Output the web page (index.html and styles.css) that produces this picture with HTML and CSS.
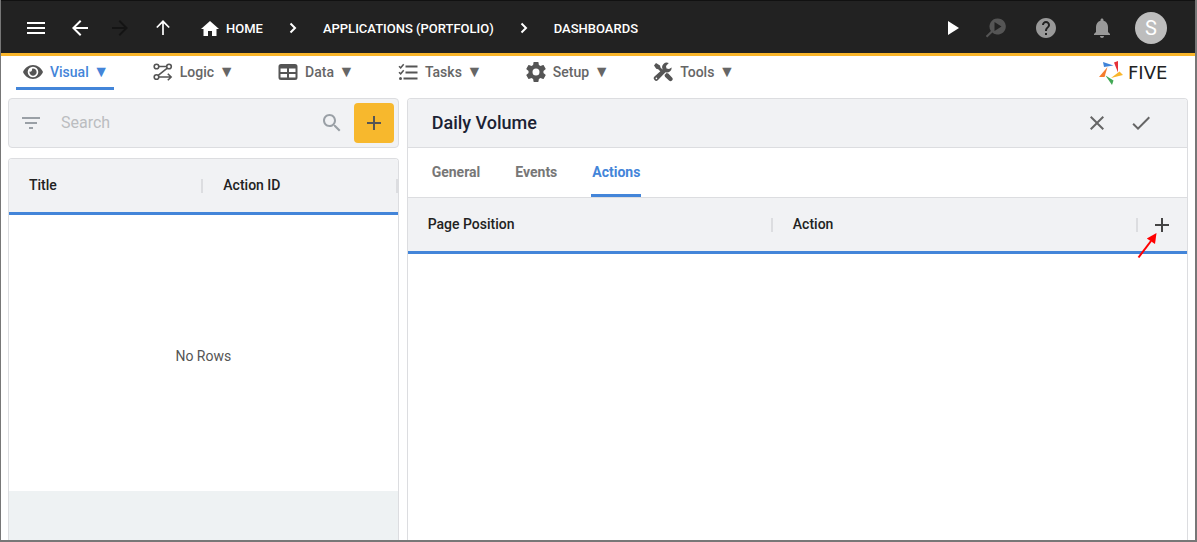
FILE: index.html
```html
<!DOCTYPE html>
<html lang="en">
<head>
<meta charset="utf-8">
<meta name="viewport" content="width=device-width, initial-scale=1">
<title>Five - Dashboards</title>
<link rel="stylesheet" href="styles.css">
</head>
<body>
<div class="app">
  <header class="topbar">
    <button class="icon-btn menu-btn" aria-label="Menu"><svg viewBox="0 0 24 24"><path d="M3 18h18v-2H3v2zm0-5h18v-2H3v2zm0-7v2h18V6H3z"/></svg></button>
    <button class="icon-btn back-btn" aria-label="Back"><svg viewBox="0 0 24 24"><path d="M20 11H7.83l5.59-5.59L12 4l-8 8 8 8 1.41-1.41L7.83 13H20v-2z"/></svg></button>
    <button class="icon-btn forward-btn" aria-label="Forward" disabled><svg viewBox="0 0 24 24"><path d="M12 4l-1.41 1.41L16.17 11H4v2h12.17l-5.58 5.59L12 20l8-8z"/></svg></button>
    <button class="icon-btn up-btn" aria-label="Up"><svg viewBox="0 0 24 24"><path d="M5.8 11.5 12 5.3l6.2 6.2M12 5.5V19" fill="none" stroke="currentColor" stroke-width="1.7"/></svg></button>
    <nav class="crumbs" aria-label="Breadcrumb">
      <a class="crumb" href="#"><svg class="home-icon" viewBox="0 0 20 20"><path d="M8 17v-5h4v5h4.5v-7H19L10 2 1 10h2.500v7z"/></svg>HOME</a>
      <svg class="chevron" viewBox="0 0 10 12"><path d="m2.500 1.500 4.500 4.500-4.500 4.500"/></svg>
      <a class="crumb" href="#">APPLICATIONS (PORTFOLIO)</a>
      <svg class="chevron" viewBox="0 0 10 12"><path d="m2.500 1.500 4.500 4.500-4.500 4.500"/></svg>
      <a class="crumb" href="#">DASHBOARDS</a>
    </nav>
    <div class="actions">
      <button class="icon-btn run-btn" aria-label="Run"><svg viewBox="0 0 24 24"><path d="M8 5v14l11-7z"/></svg></button>
      <button class="icon-btn inspect-btn" aria-label="Inspect"><svg viewBox="0 0 24 24"><path fill-rule="evenodd" d="M13.500 2.500a8 8 0 0 0-6.600 12.500L1.800 20.100l1.400 1.400 5.200-5.100A8 8 0 1 0 13.500 2.500zM10.500 6v9l7-4.500z"/></svg></button>
      <button class="icon-btn help-btn" aria-label="Help"><svg viewBox="0 0 24 24"><path d="M12 2C6.480 2 2 6.480 2 12s4.480 10 10 10 10-4.480 10-10S17.520 2 12 2zm1 17h-2v-2h2v2zm2.070-7.750-.9.920C13.450 12.900 13 13.500 13 15h-2v-.5c0-1.100.45-2.100 1.170-2.830l1.240-1.260c.37-.36.59-.86.59-1.410 0-1.100-.9-2-2-2s-2 .9-2 2H8c0-2.210 1.790-4 4-4s4 1.790 4 4c0 .88-.36 1.680-.93 2.250z"/></svg></button>
      <button class="icon-btn bell-btn" aria-label="Notifications"><svg viewBox="0 0 24 24"><path d="M12 22c1.100 0 2-.9 2-2h-4c0 1.100.89 2 2 2zm6-6v-5c0-3.070-1.640-5.640-4.500-6.320V4c0-.83-.67-1.500-1.500-1.500s-1.500.67-1.500 1.500v.68C7.630 5.360 6 7.920 6 11v5l-2 2v1h16v-1l-2-2z"/></svg></button>
      <button class="avatar" aria-label="Account">S</button>
    </div>
  </header>

  <nav class="menubar" aria-label="Main">
    <button class="menu-item selected"><svg viewBox="0 0 20 20"><path fill-rule="evenodd" d="M10 3C5.500 3 1.800 5.900 0 10c1.800 4.100 5.500 7 10 7s8.200-2.900 10-7c-1.800-4.100-5.500-7-10-7zm0 1.700a5.300 5.300 0 1 1 0 10.600 5.300 5.300 0 0 1 0-10.600z"/><path d="M10 6.500a3.600 3.600 0 1 1-3.500 3c1.700.6 3-.9 2.500-2.800z"/></svg>Visual<span class="caret">▼</span></button>
    <button class="menu-item"><svg viewBox="0 0 20 20"><g fill="none" stroke="currentColor" stroke-width="1.600"><circle cx="3.500" cy="4.500" r="2.300"/><circle cx="16" cy="4.500" r="2.300"/><circle cx="3.500" cy="15" r="2.300"/><path d="M5.800 4.500h7.900M14.300 6.200 5.200 13.400M5.800 15h12M14.800 11.800l3.300 3.200-3.300 3.200"/></g></svg>Logic<span class="caret">▼</span></button>
    <button class="menu-item"><svg viewBox="0 0 20 20"><path fill-rule="evenodd" d="M3 2h14a2.500 2.500 0 0 1 2.500 2.500v11A2.500 2.500 0 0 1 17 18H3a2.500 2.500 0 0 1-2.500-2.500v-11A2.500 2.500 0 0 1 3 2zM2.500 6.500V10H9V6.500zm8.500 0V10h6.500V6.500zM2.500 12v3.500h6.500V12zm8.500 0v3.500h6.500V12z"/></svg>Data<span class="caret">▼</span></button>
    <button class="menu-item"><svg viewBox="0 0 20 20"><path d="M7.500 3.500h12v2h-12zM7.500 9.500h12v2h-12zM5.500 15.500h14v2h-14z"/><circle cx="2.500" cy="16.500" r="1.500"/><path d="m1 4.200 1.700 1.600L5.700 2.300M1 10.200l1.700 1.600L5.700 8.300" fill="none" stroke="currentColor" stroke-width="1.500"/></svg>Tasks<span class="caret">▼</span></button>
    <button class="menu-item"><svg viewBox="2 2 20 20"><path d="M19.430 12.980c.04-.32.07-.64.07-.98s-.03-.66-.07-.98l2.110-1.650c.19-.15.24-.42.12-.64l-2-3.460c-.12-.22-.39-.3-.61-.22l-2.490 1c-.52-.4-1.080-.73-1.690-.98l-.38-2.650C14.460 2.180 14.250 2 14 2h-4c-.25 0-.46.18-.49.42l-.38 2.650c-.61.25-1.170.59-1.690.98l-2.490-1c-.23-.09-.49 0-.61.22l-2 3.460c-.13.22-.07.49.12.64l2.110 1.650c-.04.32-.07.65-.07.98s.03.66.07.98l-2.110 1.650c-.19.15-.24.42-.12.64l2 3.460c.12.22.39.3.61.22l2.490-1c.52.4 1.080.73 1.690.98l.38 2.650c.03.24.24.42.49.42h4c.25 0 .46-.18.49-.42l.38-2.650c.61-.25 1.170-.59 1.690-.98l2.490 1c.23.09.49 0 .61-.22l2-3.460c.12-.22.07-.49-.12-.64l-2.110-1.650zM12 15.500a3.500 3.500 0 1 1 0-7 3.500 3.500 0 0 1 0 7z"/></svg>Setup<span class="caret">▼</span></button>
    <button class="menu-item"><svg viewBox="0 0 20 20"><path d="M1 3.500 3 1l4 2.500.5 2L11 9l-2 2-3.800-3.800-2-.5zM11.500 13l2-2 1.800.5 3.700 4a2 2 0 0 1-3 3l-4-3.700z"/><path d="M18.700 5.500a4.700 4.700 0 0 1-6.200 4.700L5 18a2.400 2.400 0 0 1-3.500-3.400L9.600 7.300A4.700 4.700 0 0 1 15.800 1L13 4l.5 2.500 2.500.4z"/><circle cx="3.400" cy="16.400" r=".8" fill="#fff"/></svg>Tools<span class="caret">▼</span></button>
    <a class="brand" href="#" aria-label="Five">
      <svg class="brand-mark" viewBox="0 0 24 24"><path fill="#3f83d8" d="M4 1 14.500 4.500 5 6z"/><path fill="#e53238" d="M15 1.500 19 0v11.500z"/><path fill="#f9b52a" d="M20.500 10.500 24 14 12 17z"/><path fill="#42a855" d="m6.500 14.500 8 5-1.500 4.500z"/><path fill="#f57c2c" d="M8.500 6 5.500 16 0 16z"/></svg>
      <span class="brand-name">FIVE</span>
    </a>
  </nav>

  <main class="workspace">
    <section class="list-side">
      <form class="search">
        <button class="icon-btn filter-btn" type="button" aria-label="Filter"><svg viewBox="0 0 24 24"><path d="M10 18h4v-2h-4v2zM3 6v2h18V6H3zm3 7h12v-2H6v2z"/></svg></button>
        <input class="search-input" type="text" placeholder="Search" aria-label="Search">
        <button class="icon-btn find-btn" type="button" aria-label="Find"><svg viewBox="0 0 24 24"><path d="M15.500 14h-.79l-.28-.27C15.410 12.590 16 11.110 16 9.500 16 5.910 13.090 3 9.500 3S3 5.910 3 9.500 5.910 16 9.500 16c1.610 0 3.090-.59 4.230-1.570l.27.28v.79l5 4.990L20.490 19l-4.990-5zm-6 0C7.010 14 5 11.990 5 9.500S7.010 5 9.500 5 14 7.010 14 9.500 11.990 14 9.500 14z"/></svg></button>
        <button class="add-btn" type="button" aria-label="Add"><svg viewBox="0 0 24 24"><path d="M19 13h-6v6h-2v-6H5v-2h6V5h2v6h6v2z"/></svg></button>
      </form>
      <div class="panel list-panel">
        <table class="grid">
          <thead><tr><th scope="col">Title</th><th scope="col">Action ID</th></tr></thead>
          <tbody><tr><td class="empty" colspan="2">No Rows</td></tr></tbody>
        </table>
        <div class="list-footer"></div>
      </div>
    </section>

    <section class="panel detail">
      <div class="detail-head">
        <h1 class="detail-title">Daily Volume</h1>
        <button class="icon-btn" aria-label="Cancel"><svg viewBox="0 0 24 24"><path d="M19 6.410 17.590 5 12 10.590 6.410 5 5 6.410 10.590 12 5 17.590 6.410 19 12 13.410 17.590 19 19 17.590 13.410 12z"/></svg></button>
        <button class="icon-btn" aria-label="Save"><svg viewBox="0 0 24 24"><path d="M9 16.170 4.830 12l-1.420 1.410L9 19 21 7l-1.410-1.410z"/></svg></button>
      </div>
      <div class="tabs" role="tablist">
        <button class="tab" role="tab">General</button>
        <button class="tab" role="tab">Events</button>
        <button class="tab active" role="tab" aria-selected="true">Actions</button>
      </div>
      <table class="grid">
        <thead><tr><th scope="col">Page Position</th><th scope="col">Action</th><th class="add-cell"><button class="icon-btn row-add" aria-label="Add action"><svg viewBox="0 0 24 24"><path d="M19 13h-6v6h-2v-6H5v-2h6V5h2v6h6v2z"/></svg><svg class="pointer" viewBox="0 0 20 26"><path d="M1.500 24.500 14 8" fill="none" stroke="#f00" stroke-width="2"/><path fill="#f00" d="M19.500 0 18 11 9.800 5.500z"/></svg></button></th></tr></thead>
      </table>
    </section>
  </main>
</div>
</body>
</html>
```
FILE: styles.css
```css
* { box-sizing: border-box; }
body {
  margin: 0;
  font: 14px/20px Roboto, "Liberation Sans", sans-serif;
  color: #222;
  background: #fff;
}
button, input { font: inherit; color: inherit; }
button { border: 0; padding: 0; background: none; cursor: pointer; }
a { color: inherit; text-decoration: none; }
svg { display: block; flex: none; fill: currentColor; }

.app {
  display: flex;
  flex-direction: column;
  height: 100vh;
  overflow: hidden;
  border: solid #777;
  border-width: 0 2px 2px 1px;
}

.icon-btn { display: grid; place-items: center; flex: none; width: 24px; height: 24px; }
.icon-btn svg { width: 24px; height: 24px; }

.topbar {
  display: flex;
  align-items: center;
  flex: none;
  height: 56px;
  padding: 2px 28px 0 23px;
  color: #fff;
  background: #222;
  border-top: 1px solid #111;
  border-bottom: 3px solid #f9b52a;
}
.back-btn { margin-left: 20px; }
.forward-btn { margin-left: 16px; color: #141414; }
.up-btn { margin-left: 19px; }
.crumbs { display: flex; align-items: center; margin-left: 25px; font-size: 13px; font-weight: 500; }
.crumb { display: flex; align-items: center; gap: 6px; padding-top: 1px; }
.home-icon { width: 20px; height: 20px; }
.chevron { width: 10px; height: 12px; margin: 0 25px; fill: none; stroke: #fff; stroke-width: 2; }
.actions { display: flex; align-items: center; gap: 20px; margin-left: auto; }
.inspect-btn { color: #555; }
.help-btn, .bell-btn { color: #999; }
.help-btn { margin-left: 6px; }
.bell-btn { margin-left: 12px; }
.avatar {
  width: 32px;
  height: 32px;
  margin-left: 1px;
  border-radius: 50%;
  color: #fff;
  background: #bdbdbd;
  font-size: 20px;
}

.menubar { display: flex; flex: none; gap: 32px; height: 34px; padding: 0 8px 0 15px; color: #666; }
.menu-item {
  display: flex;
  align-items: center;
  gap: 7px;
  height: 34px;
  padding: 0 7px;
  border-bottom: 3px solid transparent;
  font-weight: 500;
}
.menu-item svg { width: 20px; height: 20px; color: #555; }
.menu-item .caret { display: flex; justify-content: center; width: 11px; font-size: 16px; }
.selected { color: #4385d9; border-bottom-color: #4385d9; }
.brand { display: flex; align-items: center; gap: 5px; margin-left: auto; }
.brand-mark { width: 24px; height: 24px; }
.brand-name { width: 59px; font: 18px/20px "DejaVu Sans", sans-serif; color: #222; }

.workspace { display: flex; flex: 1; gap: 8px; min-height: 0; padding: 8px 7px 0; }
.list-side { display: flex; flex-direction: column; flex: 1 1 1px; gap: 10px; }
.search {
  display: flex;
  align-items: center;
  flex: none;
  height: 50px;
  padding: 0 4px 0 10px;
  border: 1px solid #dcdde0;
  border-radius: 4px;
  background: #f1f2f4;
}
.filter-btn, .find-btn { color: #9aa0a6; }
.search-input {
  flex: 1;
  min-width: 0;
  padding: 0;
  margin-left: 18px;
  border: 0;
  background: none;
  font-size: 16px;
}
.search-input::placeholder { color: #bbbdc0; opacity: 1; }
.add-btn {
  display: grid;
  place-items: center;
  width: 40px;
  height: 40px;
  margin-left: 10px;
  border-radius: 4px;
  color: #555;
  background: #f7b82d;
}
.add-btn svg { width: 24px; height: 24px; }

.panel {
  border: 1px solid #dcdde0;
  border-bottom: 0;
  border-radius: 4px 4px 0 0;
  overflow: hidden;
}
.list-panel { display: flex; flex-direction: column; flex: 1; }
.list-footer { flex: 1; background: #eef2f3; }

.grid { width: 100%; border-collapse: separate; border-spacing: 0; table-layout: fixed; }
.grid th {
  height: 56px;
  padding: 0 20px 2px;
  text-align: left;
  font-weight: 500;
  background: linear-gradient(#dcdde0, #dcdde0) right center / 2px 14px no-repeat #f1f2f4;
  border-bottom: 3px solid #4385d9;
}
.grid .empty { height: 276px; padding: 6px 0 0; text-align: center; color: #555; }
.grid .add-cell { width: 49px; padding: 0 12px; background: #f1f2f4; color: #444; }
.row-add { position: relative; }
.row-add .pointer { position: absolute; top: 20px; left: -13px; width: 20px; height: 26px; }

.detail { flex: 2; }
.detail-head {
  display: flex;
  align-items: center;
  gap: 20px;
  height: 49px;
  padding: 0 34px 0 24px;
  background: #f1f2f4;
  border-bottom: 1px solid #dcdde0;
  color: #666;
}
.detail-title { flex: 1; margin: 0; font-size: 18px; font-weight: 500; color: #1b2233; }
.tabs { display: flex; gap: 33px; height: 50px; padding: 0 23px; border-bottom: 1px solid #dcdde0; }
.tab { padding: 1px 1px 0; border-bottom: 3px solid transparent; font-weight: 700; color: #777; }
.tab.active { color: #4385d9; border-bottom-color: #4385d9; }
```
